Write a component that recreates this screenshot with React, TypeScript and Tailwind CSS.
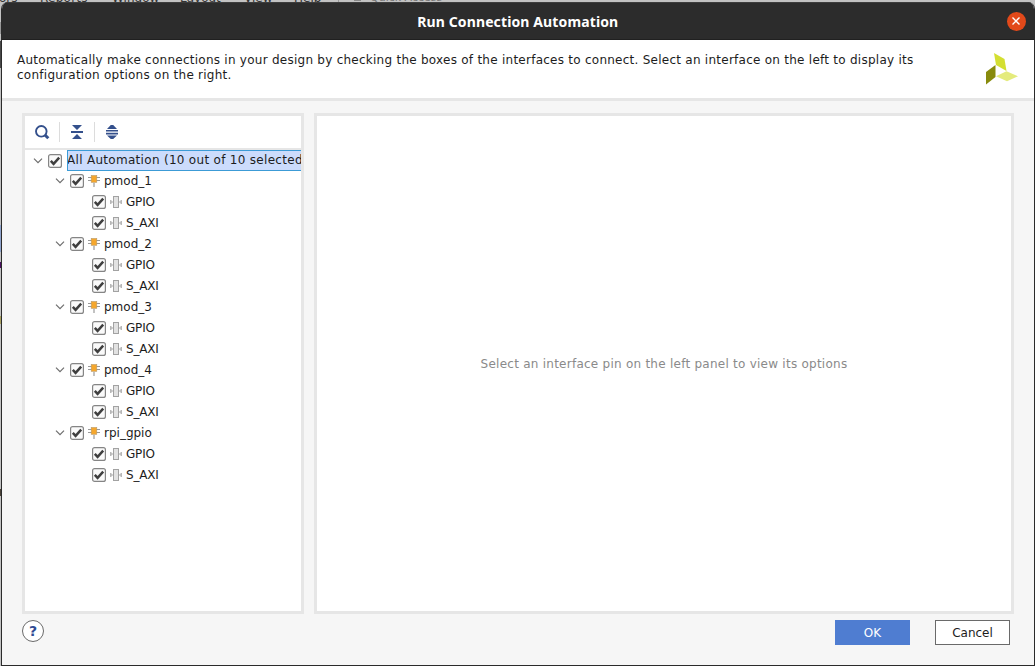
import React from "react";

const groups = ["pmod_1", "pmod_2", "pmod_3", "pmod_4", "rpi_gpio"];

function Chevron() {
  return (
    <svg className="h-[6px] w-[10px] shrink-0" viewBox="0 0 10 6" fill="none" stroke="#6e6e6e" strokeWidth="1.2">
      <path d="M1 .7 5 4.7 9 .7" />
    </svg>
  );
}

function Check() {
  return (
    <svg className="h-[14px] w-[14px] shrink-0" viewBox="0 0 14 14">
      <rect x=".6" y=".6" width="12.8" height="12.8" rx="2" fill="#fafafa" stroke="#858585" strokeWidth="1.2" />
      <path d="M2.8 6.8 5.6 9.8 11.2 3.7" fill="none" stroke="#3f3f3f" strokeWidth="2.5" />
    </svg>
  );
}

function BlockIcon() {
  return (
    <svg className="h-[12px] w-[12px] shrink-0" viewBox="0 0 12 12">
      <path d="M0 2.5H12M0 5.5H12" stroke="#9a9a9a" fill="none" />
      <path d="M6 8V12" stroke="#a8a8a8" strokeWidth="1.4" fill="none" />
      <rect x="3.2" y="0.5" width="5.6" height="6.8" fill="#f5a72d" stroke="#b99a68" strokeWidth=".6" />
    </svg>
  );
}

function PinIcon() {
  return (
    <svg className="h-[12px] w-[12px] shrink-0" viewBox="0 0 12 12">
      <path d="M.8 4V8M11.2 4V8M.5 6H3M9 6H11.5" stroke="#a6a6a6" strokeWidth="1.2" fill="none" />
      <rect x="3.5" y=".5" width="5" height="11" fill="#e2e2e2" stroke="#a2a2a2" />
    </svg>
  );
}

export default function App() {
  return (
    <div className="flex h-[666px] w-[1035px] flex-col overflow-hidden bg-[#c2c2c2] bg-[linear-gradient(to_bottom,#c2c2c2_22px,#999_22px,#999_34px,#c2c2c2_34px,#c2c2c2_41px,#484848_41px,#484848_68px,#c2c2c2_68px,#c2c2c2_225px,#8fa3cc_225px,#8fa3cc_252px,#c2c2c2_252px,#c2c2c2_262px,#4a1060_262px,#4a1060_268px,#c2c2c2_268px,#c2c2c2_316px,#a8a060_316px,#a8a060_324px,#c2c2c2_324px,#c2c2c2_489px,#4a4238_489px,#4a4238_496px,#c2c2c2_496px)] font-['DejaVu_Sans',sans-serif] text-[12px] text-[#1c1c1c]">
      <div className="relative h-[2px] shrink-0 overflow-hidden whitespace-nowrap leading-[14px] text-[#333]">
        <span className="absolute left-[-1px] top-[-9px]">ors</span>
        <span className="absolute left-[40px] top-[-9px] tracking-[0.25px]">Reports</span>
        <span className="absolute left-[112px] top-[-9px]">Window</span>
        <span className="absolute left-[180px] top-[-9px]">Layout</span>
        <span className="absolute left-[244px] top-[-9px]">View</span>
        <span className="absolute left-[294px] top-[-9px]">Help</span>
        <i className="absolute left-[338px] top-0 h-[2px] w-px bg-[#999]" />
        <i className="absolute left-[354px] top-0 h-[1px] w-[7px] bg-[#888]" />
        <span className="absolute left-[370px] top-[-9px] text-[11px] text-[#777]">Quick Access</span>
      </div>
      <div className="ml-px flex h-[664px] w-[1034px] flex-col overflow-hidden rounded-t-[7px] border-b border-l border-r border-[#2b2b2b] bg-[#f6f6f6]">
        <header className="flex h-[38px] shrink-0 items-center border-b border-t border-b-[#202020] border-t-[#3d3d3d] bg-[#2c2c2c] pr-[8.5px]">
          <h1 className="flex-1 pl-[27px] pt-[2px] text-center font-['Noto_Sans',sans-serif] text-[14px] font-bold leading-[20px] tracking-[0.12px] text-white">Run Connection Automation</h1>
          <button className="flex h-[19px] w-[19px] items-center justify-center rounded-full bg-[#e2491a]">
            <svg className="h-[8px] w-[8px]" viewBox="0 0 8 8" stroke="#fff" strokeWidth="1.4"><path d="M.5.5 7.5 7.5M7.5.5.5 7.5" /></svg>
          </button>
        </header>
        <section className="flex h-[61px] shrink-0 justify-between border-b-[3px] border-[#e6e6e6] bg-white pl-[15px] pr-[16px]">
          <p className="whitespace-nowrap pt-[13px] leading-[15px] tracking-[0.255px]">
            Automatically make connections in your design by checking the boxes of the interfaces to connect. Select an interface on the left to display its
            <br />
            configuration options on the right.
          </p>
          <svg className="mt-[13px] h-[32px] w-[32px] shrink-0" viewBox="0 0 32 32">
            <path d="M8 0 18.5 6 20.5 18 10 12Z" fill="#d4df32" />
            <path d="M9.5 12V24L0 31.5V19Z" fill="#888b0c" />
            <path d="M10 23.3 20.5 18.3 32 23.3 21 28.3Z" fill="#e4eb7c" />
          </svg>
        </section>
        <main className="mt-[12px] flex h-[501px] shrink-0 gap-[10px] pl-[20px]">
          <aside className="h-[501px] w-[282px] overflow-hidden border-[3px] border-[#e6e6e6] bg-white">
            <div className="flex h-[34px] items-center border-b-2 border-[#e6e6e6]">
              <svg className="ml-[9px] h-[16px] w-[16px]" viewBox="0 0 16 16" fill="none" stroke="#34508c">
                <circle cx="7.3" cy="7.3" r="5.3" strokeWidth="1.9" />
                <path d="M11 11 14.3 14.3" strokeWidth="3" />
              </svg>
              <i className="ml-[9px] h-[20px] w-px bg-[#dcdcdc]" />
              <svg className="ml-[11px] h-[14px] w-[12px]" viewBox="0 0 12 14" fill="#34508c"><path d="M1 0H11L6 5ZM0 6H12V8H0ZM1 14H11L6 9Z" /></svg>
              <i className="ml-[11px] h-[20px] w-px bg-[#dcdcdc]" />
              <svg className="ml-[11px] h-[14px] w-[12px]" viewBox="0 0 12 14" fill="#34508c"><path d="M1 4 4.8 0H7.2L11 4ZM0 5H12V6.6H0ZM0 7.8H12V9.4H0ZM1 10.4H11L7.2 14H4.8Z" /></svg>
            </div>
            <div className="mb-[-1px] flex h-[21px] items-center pl-[8px]">
              <Chevron />
              <span className="ml-[5px] flex"><Check /></span>
              <span className="ml-[5px] h-[21px] min-w-0 flex-1 overflow-hidden whitespace-nowrap border-y border-l border-[#3c9bd6] bg-[#ccdcfc] indent-[-1px] leading-[18px] tracking-[0.3px]">All Automation (10 out of 10 selected)</span>
            </div>
            {groups.map((name) => (
              <div key={name}>
                <div className="flex h-[21px] items-center pl-[30px]">
                  <Chevron />
                  <span className="ml-[5px] flex"><Check /></span>
                  <span className="ml-[4px] flex"><BlockIcon /></span>
                  <span className="ml-[4px]">{name}</span>
                </div>
                {["GPIO", "S_AXI"].map((pin) => (
                  <div key={pin} className="flex h-[21px] items-center pl-[67px]">
                    <Check />
                    <span className="ml-[4px] flex"><PinIcon /></span>
                    <span className="ml-[4px] tracking-[-0.2px]">{pin}</span>
                  </div>
                ))}
              </div>
            ))}
          </aside>
          <section className="flex h-[501px] w-[700px] items-center justify-center border-[3px] border-[#e6e6e6] bg-white tracking-[0.25px] text-[#8a8a8a]">
            Select an interface pin on the left panel to view its options
          </section>
        </main>
        <footer className="flex items-start pl-[20px] pt-[6px]">
          <button className="flex h-[22px] w-[22px] items-center justify-center rounded-full border border-[#6a6a6a] bg-white text-[14px] font-bold text-[#2f4b93]">?</button>
          <button className="ml-[791px] h-[25px] w-[75px] bg-[#4f7dd1] text-white">OK</button>
          <button className="ml-[25px] h-[25px] w-[75px] border border-[#6a6a6a] bg-white">Cancel</button>
        </footer>
      </div>
    </div>
  );
}
